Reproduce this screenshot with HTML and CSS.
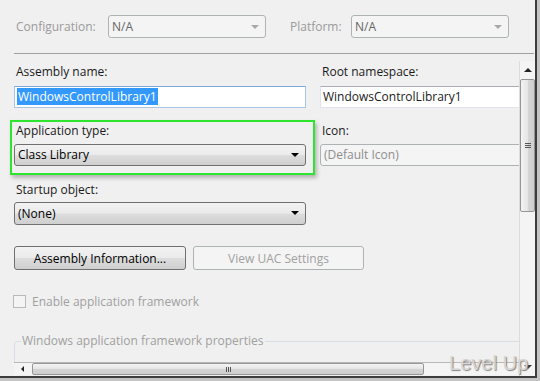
FILE: index.html
```html
<!DOCTYPE html>
<html lang="en">
<head>
  <meta charset="UTF-8">
  <title>Application properties</title>
  <link rel="stylesheet" href="styles.css">
</head>
<body>
  <div class="window">
    <!-- configuration / platform bar -->
    <div class="toolbar">
      <span class="top-label config-label">Configuration:</span>
      <div class="combo combo-off">N/A<span class="arrow-off"></span></div>
      <span class="top-label platform-label">Platform:</span>
      <div class="combo combo-off">N/A<span class="arrow-off"></span></div>
    </div>
    <div class="divider"></div>

    <div class="pane">
      <div class="viewport">
        <div class="content">
          <div class="row row-first">
            <div class="field">
              <div class="lbl">Assembly name:</div>
              <div class="textbox focused"><span class="selected">WindowsControlLibrary1</span></div>
            </div>
            <div class="field">
              <div class="lbl">Root namespace:</div>
              <div class="textbox">WindowsControlLibrary1</div>
            </div>
          </div>

          <div class="row row-app">
            <div class="field highlighted">
              <div class="lbl">Application type:</div>
              <div class="combo combo-on">Class Library<span class="arrow-on"></span></div>
            </div>
            <div class="field">
              <div class="lbl">Icon:</div>
              <div class="combo combo-off muted">(Default Icon)</div>
            </div>
          </div>

          <div class="row row-startup">
            <div class="field">
              <div class="lbl">Startup object:</div>
              <div class="combo combo-on tall">(None)<span class="arrow-on"></span></div>
            </div>
          </div>

          <div class="buttons">
            <button class="btn">Assembly Information...</button>
            <button class="btn btn-off" disabled>View UAC Settings</button>
          </div>

          <label class="check">
            <span class="box"></span>
            Enable application framework
          </label>

          <fieldset class="group">
            <legend>Windows application framework properties</legend>
          </fieldset>
        </div>

        <div class="hscroll">
          <div class="hs-arrow"><span class="tri-left"></span></div>
          <div class="hs-thumb"><span class="grip-v"></span></div>
        </div>
      </div>

      <div class="vscroll">
        <div class="vs-arrow"><span class="tri-up"></span></div>
        <div class="vs-thumb"><span class="grip-h"></span></div>
        <div class="vs-track"></div>
        <div class="vs-arrow"><span class="tri-down"></span></div>
      </div>
    </div>

    <div class="watermark">Level Up</div>
  </div>
</body>
</html>
```

FILE: styles.css
```css
* {
  margin: 0;
  padding: 0;
  box-sizing: border-box;
}

html, body {
  width: 540px;
  height: 381px;
  overflow: hidden;
}

body {
  background: #c4c4c4;
  font-family: 'Open Sans', 'Noto Sans', sans-serif;
  font-size: 12px;
  color: #1a1a1a;
}

.window {
  position: relative;
  width: 537px;
  height: 378px;
  background: #f0f0f0;
  border-right: 2px solid #3c3c3c;
  border-bottom: 2px solid #3c3c3c;
  overflow: hidden;
}

/* top bar */
.toolbar {
  height: 53px;
  display: flex;
  align-items: center;
  padding-left: 16px;
}

.top-label {
  color: #9a9a9a;
}

.config-label {
  width: 92px;
}

.platform-label {
  width: 61px;
  margin-left: 24px;
}

.divider {
  margin-left: 14px;
  width: 520px;
  height: 1px;
  background: #a0a0a0;
}

/* combos */
.combo {
  position: relative;
  height: 22px;
  line-height: 20px;
  padding-left: 3px;
  border-radius: 3px;
  white-space: nowrap;
}

.toolbar .combo {
  width: 158px;
  height: 23px;
  line-height: 21px;
}

.combo-off {
  background: #f4f4f4;
  border: 1px solid #adb2b5;
  color: #666;
}

.combo-off.muted {
  color: #8d8d8d;
  width: 230px;
}

.combo-on {
  border: 1px solid #707070;
  background: linear-gradient(#f2f2f2 0%, #ebebeb 48%, #dddddd 52%, #cfcfcf 100%);
  color: #000;
}

.combo-on.tall {
  height: 23px;
  line-height: 21px;
}

.arrow-off,
.arrow-on {
  position: absolute;
  right: 6px;
  top: 9px;
  width: 0;
  height: 0;
  border-left: 4px solid transparent;
  border-right: 4px solid transparent;
}

.arrow-off {
  border-top: 4px solid #a8a8a8;
}

.arrow-on {
  top: 8px;
  border-top: 4px solid #000;
}

/* scroll pane */
.pane {
  display: flex;
  height: 322px;
}

.viewport {
  width: 519px;
  display: flex;
  flex-direction: column;
}

.content {
  flex: 1;
  overflow: hidden;
  padding-left: 14px;
}

.row {
  display: grid;
  grid-template-columns: 292px 220px;
  column-gap: 14px;
}

.row-first {
  margin-top: 10px;
}

.row-app {
  margin-top: 15px;
}

.row-startup {
  margin-top: 16px;
}

.field {
  display: flex;
  flex-direction: column;
  gap: 5px;
}

.row-first .field {
  gap: 6px;
}

.row-startup .field {
  gap: 4px;
}

.lbl {
  height: 16px;
  line-height: 16px;
  padding-left: 2px;
}

.highlighted {
  position: relative;
}

/* green annotation frame */
.highlighted::before {
  content: '';
  position: absolute;
  top: -3px;
  left: -4px;
  right: -9px;
  bottom: -9px;
  border: 2px solid #2ee52e;
  box-shadow: 2px 3px 4px rgba(0, 0, 0, 0.25);
  pointer-events: none;
}

.textbox {
  height: 22px;
  line-height: 20px;
  padding-left: 2px;
  background: #fff;
  border: 1px solid #e2e3ea;
  border-top-color: #abadb3;
  white-space: nowrap;
  width: 230px;
}

.textbox.focused {
  width: auto;
  border-color: #a9c6e6;
  border-top-color: #7ea7d6;
}

.selected {
  background: #3399ff;
  color: #fff;
  padding: 0 1px;
}

/* buttons */
.buttons {
  display: flex;
  gap: 7px;
  margin-top: 21px;
}

.btn {
  height: 24px;
  font-family: inherit;
  font-size: 12px;
  border: 1px solid #707070;
  border-radius: 3px;
  background: linear-gradient(#f2f2f2 0%, #ebebeb 48%, #dddddd 52%, #cfcfcf 100%);
  color: #000;
  width: 172px;
}

.btn-off {
  width: 171px;
  background: #f4f4f4;
  border-color: #adb2b5;
  color: #a0a0a0;
}

/* checkbox */
.check {
  display: flex;
  align-items: center;
  gap: 6px;
  height: 16px;
  margin-top: 23px;
  margin-left: -1px;
  color: #a0a0a0;
}

.box {
  width: 13px;
  height: 13px;
  border: 1px solid #b9b9b9;
  background: #f4f4f4;
}

/* group box */
.group {
  margin-top: 24px;
  height: 60px;
  width: 540px;
  border: 1px solid #d5dfe5;
  border-radius: 3px;
  padding: 0 6px;
}

.group legend {
  padding: 0 1px;
  color: #a0a0a0;
  line-height: 16px;
}

/* horizontal scrollbar */
.hscroll {
  height: 13px;
  margin: 0 0 1px 14px;
  display: flex;
  align-items: center;
  background: #f4f4f4;
  border-top: 1px solid #b8b8b8;
}

.hs-arrow {
  width: 17px;
  display: flex;
  justify-content: center;
}

.tri-left {
  border-top: 3px solid transparent;
  border-bottom: 3px solid transparent;
  border-right: 3px solid #222;
}

.hs-thumb {
  width: 392px;
  height: 12px;
  margin-left: 1px;
  border: 1px solid #979797;
  border-radius: 2px;
  background: linear-gradient(#f4f4f4, #e4e4e4 50%, #d4d4d4 51%, #cdcdcd);
  display: flex;
  justify-content: center;
  align-items: center;
}

.grip-v {
  width: 5px;
  height: 5px;
  border-left: 1px solid #555;
  border-right: 1px solid #555;
  position: relative;
}

.grip-v::after {
  content: '';
  position: absolute;
  left: 1px;
  top: 0;
  width: 1px;
  height: 5px;
  background: #555;
}

/* vertical scrollbar */
.vscroll {
  width: 16px;
  margin-top: 7px;
  display: flex;
  flex-direction: column;
  background: #f4f4f4;
  border-left: 1px solid #dcdcdc;
}

.vs-arrow {
  height: 18px;
  display: flex;
  justify-content: center;
  align-items: center;
}

.tri-up {
  border-left: 4px solid transparent;
  border-right: 4px solid transparent;
  border-bottom: 4px solid #222;
}

.tri-down {
  border-left: 4px solid transparent;
  border-right: 4px solid transparent;
  border-top: 4px solid #333;
}

.vs-thumb {
  height: 133px;
  border: 1px solid #959595;
  border-radius: 2px;
  background: linear-gradient(90deg, #f3f3f3, #e6e6e6 50%, #d6d6d6 51%, #cfcfcf);
  display: flex;
  justify-content: center;
  align-items: center;
}

.grip-h {
  width: 6px;
  height: 5px;
  border-top: 1px solid #555;
  border-bottom: 1px solid #555;
  position: relative;
}

.grip-h::after {
  content: '';
  position: absolute;
  top: 1px;
  left: 0;
  width: 6px;
  height: 1px;
  background: #555;
}

.vs-track {
  flex: 1;
}

/* watermark */
.watermark {
  position: absolute;
  right: 7px;
  bottom: 1px;
  font-family: 'Liberation Sans', Arial, sans-serif;
  font-size: 20px;
  color: #d6d6d6;
  text-shadow: 1px 1px 1px #808080;
}
```
